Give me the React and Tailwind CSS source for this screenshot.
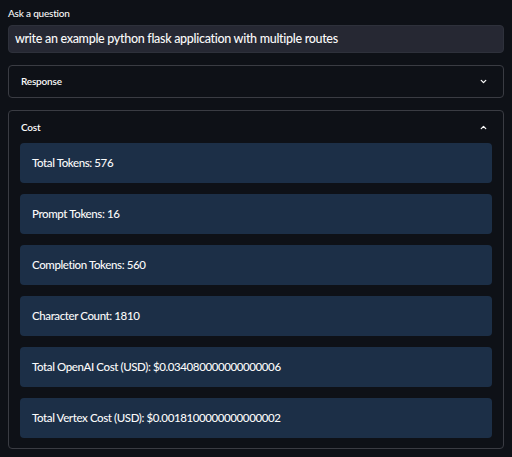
import React from 'react';
import { ChevronDown, ChevronUp } from 'lucide-react';

const stats = [
  'Total Tokens: 576',
  'Prompt Tokens: 16',
  'Completion Tokens: 560',
  'Character Count: 1810',
  'Total OpenAI Cost (USD): $0.034080000000000006',
  'Total Vertex Cost (USD): $0.0018100000000000002',
];

const App = () => {
  return (
    <div
      className="w-[512px] h-[457px] bg-[#0e1117] text-[#fafafa] px-2 pt-[5px] overflow-hidden"
      style={{ fontFamily: 'Lato, "Noto Sans", sans-serif' }}
    >
      <label className="block text-[10px] tracking-[-0.2px] font-medium leading-[14px] h-[20px] pt-[1px]">Ask a question</label>
      <div className="h-[28px] bg-[#262833] border border-[#2e313b] rounded-[4px] flex items-center px-[6px] text-[12.5px] tracking-[-0.3px] font-medium">
        write an example python flask application with multiple routes
      </div>

      <div className="mt-3 h-[33px] border border-[#3a3c43] rounded-[4px] flex items-center justify-between pl-3 pr-[15px]">
        <span className="text-[10px] tracking-[-0.2px] font-semibold">Response</span>
        <ChevronDown className="w-[9px] h-[9px]" strokeWidth={3.5} />
      </div>

      <div className="mt-3 border border-[#3a3c43] rounded-[4px] pb-[10px]">
        <div className="h-[32px] flex items-center justify-between pl-3 pr-[15px]">
          <span className="text-[10px] tracking-[-0.2px] font-semibold">Cost</span>
          <ChevronUp className="w-[9px] h-[9px]" strokeWidth={3.5} />
        </div>
        <div className="flex flex-col gap-[11px] px-[11px]">
          {stats.map((s) => (
            <div
              key={s}
              className="h-[40px] bg-[#1c2f47] rounded-[4px] flex items-center px-3 text-[11.5px] tracking-[-0.4px] font-medium"
            >
              {s}
            </div>
          ))}
        </div>
      </div>
    </div>
  );
};

export default App;
